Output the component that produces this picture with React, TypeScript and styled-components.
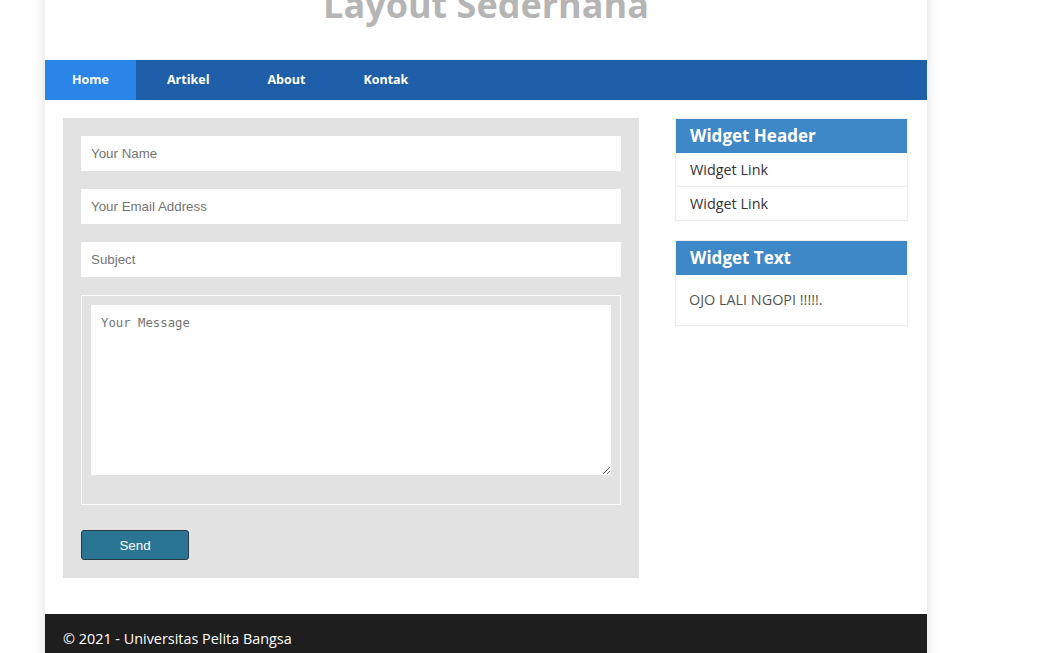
import React from 'react';
import styled, { createGlobalStyle } from 'styled-components';

const GlobalStyle = createGlobalStyle`
  body {
    margin: 0;
    background: #fff;
    font-family: 'Open Sans', 'Liberation Sans', sans-serif;
    overflow: hidden;
  }
`;

const Page = styled.div`
  width: 882px;
  margin: -15px 0 0 45px;
  background: #fff;
  box-shadow: 0 0 12px rgba(0, 0, 0, 0.14);
`;

const Header = styled.header`
  padding-bottom: 35px;
`;

const Title = styled.h1`
  margin: 0;
  text-align: center;
  font-size: 36px;
  line-height: 40px;
  font-weight: 700;
  color: #b5b5b5;
`;

const Nav = styled.nav`
  display: flex;
  gap: 4px;
  height: 40px;
  background: #1f5faa;
`;

const NavLink = styled.a<{ $active?: boolean }>`
  padding: 0 27px;
  line-height: 40px;
  font-size: 12.5px;
  font-weight: 700;
  color: #fff;
  text-decoration: none;
  background: ${(p) => (p.$active ? '#2b84e8' : 'transparent')};
`;

const Content = styled.div`
  display: flex;
  align-items: flex-start;
  gap: 36px;
  padding: 18px 19px 36px 18px;
`;

const FormPanel = styled.form`
  width: 576px;
  box-sizing: border-box;
  padding: 18px;
  background: #e2e2e2;
  display: flex;
  flex-direction: column;
  gap: 18px;
`;

const Input = styled.input`
  height: 35px;
  box-sizing: border-box;
  border: none;
  padding: 0 10px 1px;
  font-family: 'Liberation Sans', Arial, sans-serif;
  font-size: 13.33px;
  outline: none;
  &::placeholder {
    color: #757575;
  }
`;

const MessageBox = styled.div`
  border: 1px solid #fff;
  padding: 9px 9px 29px;
`;

const TextArea = styled.textarea`
  display: block;
  width: 100%;
  height: 170px;
  box-sizing: border-box;
  border: none;
  padding: 11px 10px 10px;
  font-family: 'DejaVu Sans Mono', monospace;
  font-size: 12.3px;
  outline: none;
  &::placeholder {
    color: #757575;
  }
`;

const SendButton = styled.button`
  width: 108px;
  height: 30px;
  margin-top: 7px;
  background: #2b7594;
  border: 1px solid #2a3a44;
  border-radius: 3px;
  color: #fff;
  font-family: 'Liberation Sans', Arial, sans-serif;
  font-size: 13.33px;
`;

const Sidebar = styled.aside`
  width: 233px;
  display: flex;
  flex-direction: column;
  gap: 19px;
`;

const Widget = styled.div`
  border: 1px solid #eee;
`;

const WidgetHeader = styled.h3`
  margin: 0;
  height: 34px;
  line-height: 34px;
  padding: 0 14px;
  background: #3f88c8;
  color: #fff;
  font-size: 17px;
  font-weight: 700;
`;

const WidgetLink = styled.a`
  display: block;
  height: 33px;
  line-height: 33px;
  padding: 0 14px;
  font-size: 14.4px;
  color: #333;
  text-decoration: none;
  border-bottom: 1px solid #eee;
  &:last-child {
    border-bottom: none;
  }
`;

const WidgetBody = styled.p`
  margin: 0;
  padding: 14px 13px;
  font-size: 14.4px;
  line-height: 22px;
  color: #555;
`;

const Footer = styled.footer`
  background: #1e1e1e;
  color: #fff;
  padding: 14px 18px;
  font-size: 14.4px;
  line-height: 21px;
  height: 60px;
`;

export default function App() {
  return (
    <>
      <GlobalStyle />
      <Page>
        <Header>
          <Title>Layout Sederhana</Title>
        </Header>
        <Nav>
          <NavLink href="#" $active>Home</NavLink>
          <NavLink href="#">Artikel</NavLink>
          <NavLink href="#">About</NavLink>
          <NavLink href="#">Kontak</NavLink>
        </Nav>
        <Content>
          <FormPanel onSubmit={(e) => e.preventDefault()}>
            <Input type="text" placeholder="Your Name" />
            <Input type="email" placeholder="Your Email Address" />
            <Input type="text" placeholder="Subject" />
            <MessageBox>
              <TextArea placeholder="Your Message" />
            </MessageBox>
            <SendButton type="submit">Send</SendButton>
          </FormPanel>
          <Sidebar>
            <Widget>
              <WidgetHeader>Widget Header</WidgetHeader>
              <div>
                <WidgetLink href="#">Widget Link</WidgetLink>
                <WidgetLink href="#">Widget Link</WidgetLink>
              </div>
            </Widget>
            <Widget>
              <WidgetHeader>Widget Text</WidgetHeader>
              <WidgetBody>OJO LALI NGOPI !!!!!.</WidgetBody>
            </Widget>
          </Sidebar>
        </Content>
        <Footer>© 2021 - Universitas Pelita Bangsa</Footer>
      </Page>
    </>
  );
}
